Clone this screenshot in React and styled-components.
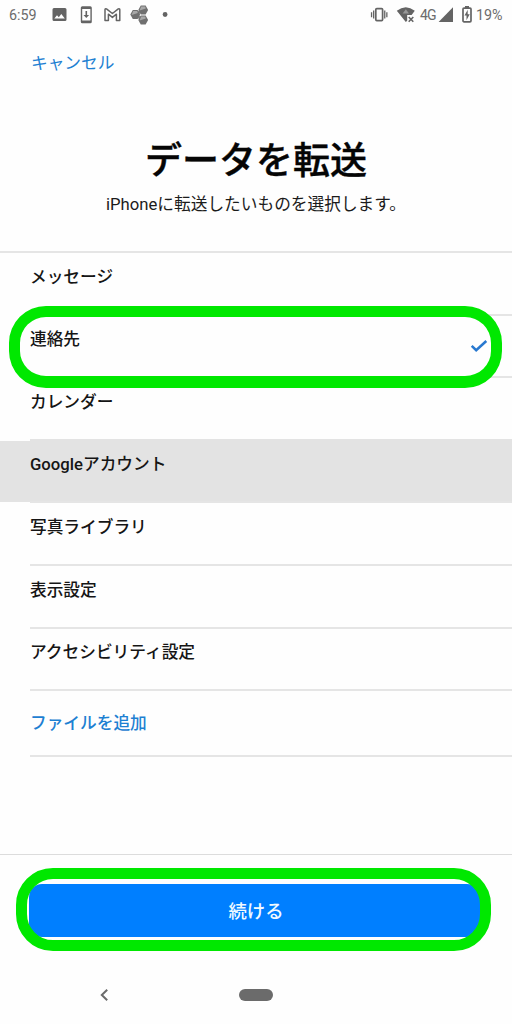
import styled, { createGlobalStyle } from "styled-components";

const GlobalStyle = createGlobalStyle`
  * {
    box-sizing: border-box;
  }

  body {
    margin: 0;
    background-color: #fefefe;
    font-family: Roboto, "Noto Sans CJK JP", sans-serif;
  }
`;

const Screen = styled.div`
  display: flex;
  flex-direction: column;
  width: 512px;
  height: 1024px;
  background-color: #fefefe;
  overflow: hidden;
`;

const StatusBar = styled.div`
  display: flex;
  justify-content: space-between;
  align-items: center;
  height: 30px;
  padding: 0 9px;
  color: #6c6c6c;
  font-size: 14.3px;
  line-height: 30px;
`;

const StatusGroup = styled.div`
  display: flex;
  align-items: center;
`;

const StatusText = styled.span`
  width: ${(props) => props.$width}px;
  margin-left: ${(props) => props.$gap || 0}px;
  white-space: nowrap;
`;

const NetworkText = styled(StatusText)`
  font-size: 14px;
  letter-spacing: -0.8px;
`;

const StatusIcon = styled.svg`
  flex: none;
  display: block;
  width: ${(props) => props.$width}px;
  height: 24px;
  margin-left: ${(props) => props.$gap || 0}px;
  fill: #646464;
`;

const TopBar = styled.nav`
  display: flex;
  align-items: center;
  height: 68px;
  padding-left: 31px;
`;

const CancelButton = styled.button`
  padding: 0;
  border: none;
  background: none;
  color: #1d80d2;
  font-family: inherit;
  font-size: 16.7px;
  line-height: 24px;
  cursor: pointer;
`;

const Heading = styled.header`
  display: flex;
  flex-direction: column;
  align-items: center;
  height: 153px;
  padding-top: 38px;
`;

const Title = styled.h1`
  margin: 0;
  color: #050505;
  font-size: 37px;
  font-weight: 500;
  line-height: 52px;
  -webkit-text-stroke: 0.4px #050505;
`;

const Subtitle = styled.p`
  margin: 5px 0 0;
  color: #1b1b1b;
  font-size: 16.7px;
  line-height: 24px;
  white-space: nowrap;
`;

const List = styled.ul`
  flex: none;
  height: 603px;
  margin: 0;
  padding: 0;
  list-style: none;
  border-top: 2px solid #e5e5e5;
`;

const Item = styled.li`
  position: relative;
  height: 62.6px;
  padding-left: 30px;
  background: ${(props) =>
    props.$disabled ? "linear-gradient(#e3e3e3, #e3e3e3) 0 0 / 100% 61px no-repeat" : "none"};
`;

const ItemBody = styled.div`
  display: flex;
  justify-content: space-between;
  height: 100%;
  padding: 12.6px 24px 0 0;
  border-bottom: 2px solid ${(props) => (props.$blend ? "#e3e3e3" : "#e5e5e5")};
  color: #151515;
  font-size: 16.7px;
  font-weight: 500;
  line-height: 24px;
`;

const AddFile = styled(ItemBody)`
  height: 66px;
  padding-top: 21px;
  color: #1d80d2;
`;

const AddItem = styled.li`
  padding-left: 30px;
`;

const Check = styled.svg`
  width: 18px;
  height: 14px;
  margin-top: 10.4px;
`;

const Highlight = styled.div`
  position: absolute;
  top: ${(props) => props.$top}px;
  left: ${(props) => props.$left}px;
  width: ${(props) => props.$width}px;
  height: ${(props) => props.$height}px;
  border: 11px solid #00e800;
  border-bottom-width: ${(props) => props.$bottom || 11}px;
  border-radius: 37px;
  pointer-events: none;
  z-index: 1;
`;

const Footer = styled.footer`
  position: relative;
  flex: none;
  height: 112px;
  padding: 29px 32px 0 29px;
  border-top: 1px solid #dcdcdc;
`;

const ContinueButton = styled.button`
  display: block;
  width: 451px;
  height: 53px;
  padding: 0 0 2px 3px;
  border: none;
  border-radius: 13px;
  background-color: #007fff;
  color: #f2faff;
  font-family: inherit;
  font-size: 18.4px;
  font-weight: 500;
  cursor: pointer;
`;

const NavBar = styled.div`
  display: grid;
  grid-template-columns: 1fr 34px 1fr;
  align-items: center;
  height: 57px;
`;

const BackIcon = styled.svg`
  width: 10px;
  height: 14px;
  margin-left: 99px;
`;

const HomePill = styled.div`
  height: 12px;
  border-radius: 6px;
  background-color: #6b6b6b;
`;

const items = [
  { label: "メッセージ" },
  { label: "連絡先", selected: true },
  { label: "カレンダー", blend: true },
  { label: "Googleアカウント", disabled: true },
  { label: "写真ライブラリ" },
  { label: "表示設定" },
  { label: "アクセシビリティ設定" },
];

const hexagons = [
  [6, 11.5],
  [14, 7],
  [14, 17],
];

const App = () => {
  return (
    <>
      <GlobalStyle />
      <Screen>
        <StatusBar>
          <StatusGroup>
            <StatusText $width={37}>6:59</StatusText>
            <StatusIcon $width={26.6} viewBox="0 0 26.6 24">
              <path
                fillRule="evenodd"
                d="M8 5h11a1.5 1.5 0 0 1 1.5 1.5v10a1.5 1.5 0 0 1-1.5 1.5H8a1.5 1.5 0 0 1-1.5-1.5v-10A1.5 1.5 0 0 1 8 5zM8.3 15.6h10.5l-3.5-4.6-2.5 3.2-1.8-2z"
              />
            </StatusIcon>
            <StatusIcon $width={26.6} viewBox="0 0 26.6 24">
              <path
                fillRule="evenodd"
                d="M9.3 3.2h8a1.5 1.5 0 0 1 1.5 1.5v14.1a1.5 1.5 0 0 1-1.5 1.5h-8a1.5 1.5 0 0 1-1.5-1.5V4.7a1.5 1.5 0 0 1 1.5-1.5zM9.2 6v11.6h8.2V6z"
              />
              <path d="M12.5 8h1.6v4h2l-2.8 3.1-2.8-3.1h2z" />
            </StatusIcon>
            <StatusIcon $width={26.6} viewBox="0 0 26.6 24">
              <path
                d="M6 17.4V6.8q0-1.4 1.5-.9l5.9 4.6 5.9-4.6q1.5-.5 1.5.9v10.6h-3.4v-6.2l-4 3.2-4-3.2v6.2z"
                fill="none"
                stroke="#646464"
                strokeWidth="1.5"
                strokeLinejoin="round"
              />
            </StatusIcon>
            <StatusIcon $width={26.6} viewBox="-3.2 0 26.6 24">
              <path d="M6 11.5l8-4.5M6 11.5l8 5.5" stroke="#858585" strokeWidth="3" />
              {hexagons.map(([x, y]) => (
                <g key={`${x}-${y}`} transform={`translate(${x} ${y})`}>
                  <path d="M-2.4-4.4h4.8L4.9 0 2.4 4.4h-4.8L-4.9 0z" fill="#707070" />
                  <path d="M-2-3.6h4L2.6-1.4-3.6.4z" fill="#a8a8a8" />
                </g>
              ))}
            </StatusIcon>
            <StatusIcon $width={26.6} viewBox="0 0 26.6 24">
              <circle cx="13.1" cy="11.5" r="2.4" />
            </StatusIcon>
          </StatusGroup>
          <StatusGroup>
            <StatusIcon $width={18} viewBox="0 0 18 24">
              <rect x="5.8" y="5.6" width="6.8" height="12" rx="1" fill="none" stroke="#646464" strokeWidth="1.7" />
              <path d="M.9 9.2h1.3v5H.9zM3 7.6h1.3v8H3zM14.1 7.6h1.3v8h-1.3zM16.2 9.2h1.3v5h-1.3z" />
            </StatusIcon>
            <StatusIcon $gap={8} $width={20} viewBox="0 0 20 24">
              <path d="M.8 7.8Q9.8.8 18.8 7.8L15.6 12h-4.4v5.7l-1.4 1.4z" />
              <path d="M6.6 10.5 9.8 6.2l3.2 4.3z" fill="#999" />
              <path d="m12.7 14 4.6 4.7m0-4.7-4.6 4.7" stroke="#646464" strokeWidth="1.6" />
            </StatusIcon>
            <NetworkText $gap={4} $width={17}>
              4G
            </NetworkText>
            <StatusIcon $gap={1} $width={16} viewBox="0 0 16 24">
              <path d="M15 4.2V19H.6z" />
            </StatusIcon>
            <StatusIcon $gap={7.5} $width={10} viewBox="0 0 10 24">
              <path d="M3 3h4v2H3z" />
              <rect x="1" y="5.1" width="8" height="13.7" rx="1" fill="none" stroke="#646464" strokeWidth="1.7" />
              <path d="M5.7 6.7 2.5 12.6h2v4.6l3.2-6h-2z" />
            </StatusIcon>
            <StatusText $gap={4.5} $width={27}>
              19%
            </StatusText>
          </StatusGroup>
        </StatusBar>
        <TopBar>
          <CancelButton type="button">キャンセル</CancelButton>
        </TopBar>
        <Heading>
          <Title>データを転送</Title>
          <Subtitle>iPhoneに転送したいものを選択します。</Subtitle>
        </Heading>
        <List>
          {items.map((item) => (
            <Item key={item.label} $disabled={item.disabled}>
              <ItemBody $blend={item.blend}>
                {item.label}
                {item.selected && (
                  <Check viewBox="0 0 18 14" fill="none" stroke="#2878cf" strokeWidth="2.5">
                    <path d="m1.7 6.8 4.5 4.4L16.3 2" />
                  </Check>
                )}
              </ItemBody>
              {item.selected && (
                <Highlight $top={-9.6} $left={9} $width={493} $height={82} $bottom={12} />
              )}
            </Item>
          ))}
          <AddItem>
            <AddFile>ファイルを追加</AddFile>
          </AddItem>
        </List>
        <Footer>
          <ContinueButton type="button">続ける</ContinueButton>
          <Highlight $top={13} $left={16} $width={475} $height={83} />
        </Footer>
        <NavBar>
          <BackIcon viewBox="0 0 10 14" fill="none" stroke="#6b6b6b" strokeWidth="2">
            <path d="M8.2 1.8 2.8 7l5.4 5.2" />
          </BackIcon>
          <HomePill />
        </NavBar>
      </Screen>
    </>
  );
};

export default App;
